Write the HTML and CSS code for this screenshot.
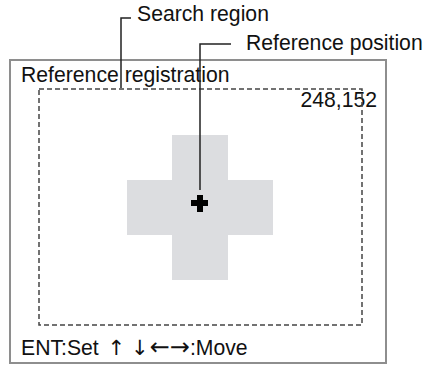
FILE: index.html
```html
<!DOCTYPE html>
<html>
<head>
    <meta charset="utf-8"/>
    <title>Reference registration</title>
    <link rel="stylesheet" href="styles.css">
</head>

<body>
<div class="figure">
    <span class="callout callout-search">Search region</span>
    <span class="callout callout-ref">Reference position</span>

    <div class="screen">
        <div class="screen-title">Reference registration</div>
        <div class="screen-coord">248,152</div>
        <div class="region">
            <svg class="region-line" width="325" height="238">
                <rect x="1" y="1" width="323" height="236" fill="none" stroke="#444" stroke-width="1.5" stroke-dasharray="5 3"/>
            </svg>
            <svg class="shape" width="146" height="145" viewBox="0 0 146 145">
                <!-- model shape -->
                <path d="M45 0H101V45H146V100H101V145H45V100H0V45H45Z" fill="#dcdde0"/>
                <!-- reference point -->
                <path d="M70 60H76V65H81V71H76V77H70V71H64V65H70Z" fill="#000"/>
            </svg>
        </div>
        <div class="screen-keys">ENT:Set <span class="arrow arrow-first">↑</span> <span class="arrow">↓</span><span class="arrow arrow-wide">←→</span>:Move</div>
    </div>

    <svg class="leaders" width="425" height="365">
        <path d="M121 88V18H131" fill="none" stroke="#222" stroke-width="1.5"/>
        <path d="M200 190V44H231" fill="none" stroke="#222" stroke-width="1.5"/>
    </svg>
</div>
</body>
</html>
```

FILE: styles.css
```css
* {
    margin: 0;
    padding: 0;
}
body {
    font-family: "Liberation Sans", Arial, sans-serif;
    font-size: 21.2px;
    line-height: 24px;
    color: #111;
    background: #fff;
}
.figure {
    position: relative;
    width: 425px;
    height: 365px;
    padding: 59px 0 0 9px;
    box-sizing: border-box;
}
.callout {
    position: absolute;
    white-space: nowrap;
}
.callout-search {
    left: 137px;
    top: 2px;
}
.callout-ref {
    left: 246px;
    top: 31px;
}
.screen {
    position: relative;
    width: 374px;
    height: 301px;
    border: 2px solid #8e8e8e;
}
.screen-title {
    margin-top: 2px;
    padding-left: 10px;
}
.screen-coord {
    position: absolute;
    right: 8px;
    top: 27px;
}
.region {
    position: relative;
    width: 325px;
    height: 238px;
    margin: 1px 0 0 27px;
    display: flex;
    align-items: center;
    justify-content: center;
}
.region-line {
    position: absolute;
    left: 0;
    top: 0;
}
.shape {
    display: block;
    margin: 1px 0 0 -1px;
}
.screen-keys {
    margin-top: 10px;
    padding-left: 10px;
    white-space: nowrap;
}
.arrow {
    font-family: "DejaVu Sans", sans-serif;
    font-variant-emoji: text;
    font-size: 21px;
    line-height: 20px;
}
.arrow-first {
    margin-left: 3px;
}
.arrow-wide {
    font-size: 24px;
    margin-left: 1px;
}
.leaders {
    position: absolute;
    left: 0;
    top: 0;
    pointer-events: none;
}
```
